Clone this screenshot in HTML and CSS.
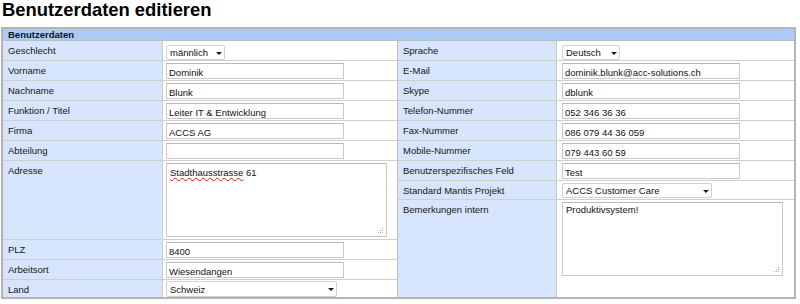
FILE: index.html
```html
<!DOCTYPE html>
<html lang="de">
<head>
<meta charset="utf-8">
<title>Benutzerdaten editieren</title>
<link rel="stylesheet" href="styles.css">
</head>
<body>
<h1 class="page-title">Benutzerdaten editieren</h1>
<div class="panel">
  <div class="panel-head">Benutzerdaten</div>
  <div class="panel-body">
    <div class="col col-left">
      <div class="row">
        <div class="lbl">Geschlecht</div>
        <div class="val val-sel-first">
          <span class="select-wrap"><select class="select w-gender"><option>männlich</option></select><svg class="caret" viewBox="0 0 6 3"><path d="M0 0H6L3 3Z"/></svg></span>
        </div>
      </div>
      <div class="row"><div class="lbl">Vorname</div><div class="val"><input class="text-input" type="text" value="Dominik"></div></div>
      <div class="row"><div class="lbl">Nachname</div><div class="val"><input class="text-input" type="text" value="Blunk"></div></div>
      <div class="row"><div class="lbl">Funktion / Titel</div><div class="val"><input class="text-input" type="text" value="Leiter IT &amp; Entwicklung"></div></div>
      <div class="row"><div class="lbl">Firma</div><div class="val"><input class="text-input" type="text" value="ACCS AG"></div></div>
      <div class="row"><div class="lbl">Abteilung</div><div class="val"><input class="text-input" type="text" value=""></div></div>
      <div class="row row-addr">
        <div class="lbl">Adresse</div>
        <div class="val">
          <div class="textarea"><span class="misspelled">Stadthausstrasse</span> 61<svg class="grip" viewBox="0 0 8 8"><rect x="6" y="2" width="1" height="1"/><rect x="4" y="4" width="1" height="1"/><rect x="6" y="4" width="1" height="1"/><rect x="2" y="6" width="1" height="1"/><rect x="4" y="6" width="1" height="1"/><rect x="6" y="6" width="1" height="1"/></svg></div>
        </div>
      </div>
      <div class="row"><div class="lbl">PLZ</div><div class="val"><input class="text-input" type="text" value="8400"></div></div>
      <div class="row"><div class="lbl">Arbeitsort</div><div class="val"><input class="text-input" type="text" value="Wiesendangen"></div></div>
      <div class="row row-last">
        <div class="lbl">Land</div>
        <div class="val val-sel-land">
          <span class="select-wrap"><select class="select sel-tall w-land"><option>Schweiz</option></select><svg class="caret" viewBox="0 0 6 3"><path d="M0 0H6L3 3Z"/></svg></span>
        </div>
      </div>
    </div>
    <div class="col col-right">
      <div class="row">
        <div class="lbl">Sprache</div>
        <div class="val val-sel-first">
          <span class="select-wrap"><select class="select w-lang"><option>Deutsch</option></select><svg class="caret" viewBox="0 0 6 3"><path d="M0 0H6L3 3Z"/></svg></span>
        </div>
      </div>
      <div class="row"><div class="lbl">E-Mail</div><div class="val"><input class="text-input" type="text" value="dominik.blunk@acc-solutions.ch"></div></div>
      <div class="row"><div class="lbl">Skype</div><div class="val"><input class="text-input" type="text" value="dblunk"></div></div>
      <div class="row"><div class="lbl">Telefon-Nummer</div><div class="val"><input class="text-input" type="text" value="052 346 36 36"></div></div>
      <div class="row"><div class="lbl">Fax-Nummer</div><div class="val"><input class="text-input" type="text" value="086 079 44 36 059"></div></div>
      <div class="row"><div class="lbl">Mobile-Nummer</div><div class="val"><input class="text-input" type="text" value="079 443 60 59"></div></div>
      <div class="row"><div class="lbl">Benutzerspezifisches Feld</div><div class="val"><input class="text-input" type="text" value="Test"></div></div>
      <div class="row row-mantis">
        <div class="lbl">Standard Mantis Projekt</div>
        <div class="val val-sel-mantis">
          <span class="select-wrap"><select class="select w-mantis"><option>ACCS Customer Care</option></select><svg class="caret" viewBox="0 0 6 3"><path d="M0 0H6L3 3Z"/></svg></span>
        </div>
      </div>
      <div class="row row-last">
        <div class="lbl">Bemerkungen intern</div>
        <div class="val">
          <div class="textarea textarea-notes">Produktivsystem!<svg class="grip" viewBox="0 0 8 8"><rect x="6" y="2" width="1" height="1"/><rect x="4" y="4" width="1" height="1"/><rect x="6" y="4" width="1" height="1"/><rect x="2" y="6" width="1" height="1"/><rect x="4" y="6" width="1" height="1"/><rect x="6" y="6" width="1" height="1"/></svg></div>
        </div>
      </div>
    </div>
  </div>
</div>
</body>
</html>
```
FILE: styles.css
```css
* { box-sizing: border-box; }

body {
  margin: 0;
  font-family: "Liberation Sans", Arial, sans-serif;
  font-size: 9.5px;
  color: #111;
  background: #fff;
}

.page-title {
  margin: 1px 0 0 2px;
  font-size: 18.4px;
  line-height: 18px;
  font-weight: bold;
  color: #000;
}

.panel {
  margin: 8px 0 0 1px;
  width: 795px;
  border: 2px solid #b4b4b4;
}

.panel-head {
  height: 12px;
  line-height: 11px;
  padding-left: 5px;
  background: #aacbf8;
  border-bottom: 1px solid #bcbcbc;
  font-weight: bold;
  color: #111;
}

.panel-body {
  display: flex;
  height: 256px;
}

.col {
  display: flex;
  flex-direction: column;
}

.col-left {
  width: 395px;
  border-right: 1px solid #bdbdbd;
}

.col-right {
  flex: 1;
}

.row {
  display: flex;
  height: 20px;
  border-bottom: 1px solid #cfcfcf;
}

.row-addr { height: 79px; }
.row-mantis { height: 19px; }

.row-last {
  border-bottom: 0;
  flex: 1;
}

.lbl {
  background: #d6e5fb;
  padding: 4px 0 0 5px;
  line-height: 12px;
  border-right: 1px solid #cbcbcb;
  color: #151515;
}

.col-left .lbl { width: 160px; }
.col-right .lbl { width: 159px; }

.val {
  flex: 1;
  padding: 2px 0 0 3px;
  background: #fff;
}

.col-right .val { padding-left: 5px; }

.val-sel-first { padding-top: 4px; }
.col-left .val-sel-land { padding-top: 1px; }
.col-right .val-sel-mantis { padding-top: 2px; }

.text-input {
  display: block;
  margin: 0;
  width: 178px;
  height: 16px;
  padding: 2px 2px 0;
  border: 1px solid #c9c9c9;
  border-top-color: #b8b8b8;
  background: #fff;
  font: inherit;
  color: #111;
  outline: none;
}

.select-wrap {
  position: relative;
  display: inline-block;
  vertical-align: top;
}

.select {
  -webkit-appearance: none;
  appearance: none;
  display: block;
  margin: 0;
  height: 15px;
  padding: 0 0 0 3px;
  border: 1px solid #d2d2d2;
  border-radius: 2px;
  background: #fff;
  font: inherit;
  line-height: 13px;
  color: #111;
}

.sel-tall { height: 16px; }

.w-gender { width: 59px; }
.w-lang { width: 58px; }
.w-land { width: 171px; }
.w-mantis { width: 150px; }

.caret {
  position: absolute;
  right: 3px;
  top: 50%;
  margin-top: -1px;
  width: 6px;
  height: 3px;
  fill: #1a1a1a;
  pointer-events: none;
}

.textarea {
  position: relative;
  width: 221px;
  height: 74px;
  padding: 3px;
  border: 1px solid #c9c9c9;
  border-top-color: #b8b8b8;
  background: #fff;
  line-height: 12px;
  color: #111;
}

.textarea-notes { padding-top: 1px; }

.misspelled {
  text-decoration: underline wavy #e01010;
  text-decoration-thickness: 1px;
  text-underline-offset: 1px;
}

.grip {
  position: absolute;
  right: 2px;
  bottom: 2px;
  width: 8px;
  height: 8px;
  fill: #a8a8a8;
}
```
